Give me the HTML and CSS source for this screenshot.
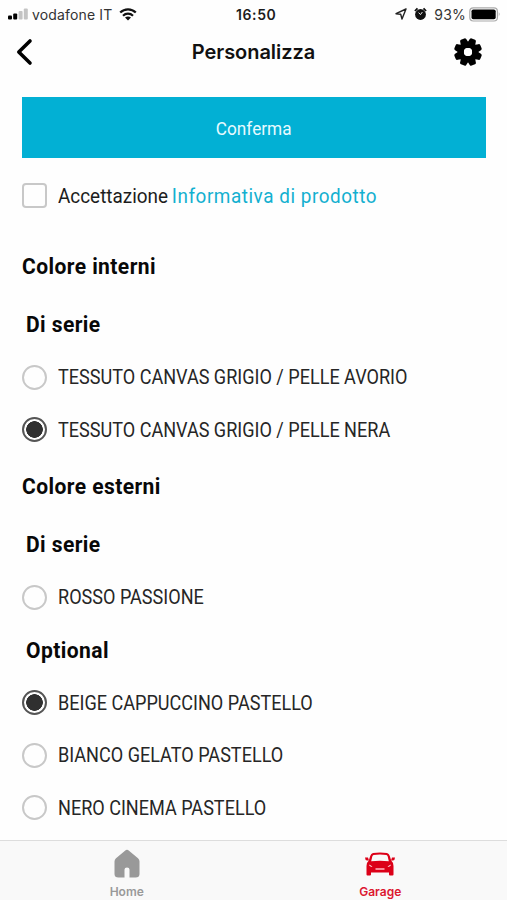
FILE: index.html
```html
<!DOCTYPE html>
<html lang="it">
<head>
<meta charset="utf-8">
<title>Personalizza</title>
<link rel="stylesheet" href="styles.css">
</head>
<body>
<div class="app">
  <header>
    <div class="status">
      <div class="status-left">
        <svg class="signal" width="20" height="12" viewBox="0 0 20 12"><rect x="0" y="7.5" width="4" height="4" rx="1"/><rect x="5.2" y="5.5" width="4" height="6" rx="1"/><rect x="10.6" y="3" width="4" height="8.5" rx="1" fill="#c4c4c4"/><rect x="15.8" y="0.5" width="4" height="11" rx="1" fill="#c4c4c4"/></svg>
        <span class="carrier">vodafone IT</span>
        <svg class="wifi" width="18" height="13" viewBox="0 0 18 13" fill="none" stroke="#111" stroke-width="2.2"><path d="M1.2 4.6C5.5.2 12.500.2 16.800 4.600M4 7.700C6.800 5 11.200 5 14 7.700"/><path d="M9 12.500L6 9.600Q9 7.200 12 9.600Z" fill="#111" stroke="none"/></svg>
      </div>
      <span class="clock">16:50</span>
      <div class="status-right">
        <svg class="arrow" width="12" height="12" viewBox="0 0 12 12" fill="none" stroke="#222" stroke-width="1.4" stroke-linejoin="round"><path d="M11 1L1 5.700L5.700 6.300L7 11Z"/></svg>
        <svg class="alarm" width="13" height="14" viewBox="0 0 13 14"><circle cx="6.500" cy="7.500" r="5.400" fill="#111"/><path d="M.9 4L3.500 1.300M12.100 4L9.500 1.300" stroke="#111" stroke-width="1.800"/><path d="M4.600 5.600L6.500 7.600L8.400 5" fill="none" stroke="#fff" stroke-width=".9"/></svg>
        <span class="percent">93%</span>
        <svg class="battery" width="32" height="15" viewBox="0 0 32 15"><rect x=".8" y=".8" width="27.600" height="13.200" rx="3.500" fill="#fff" stroke="#aaa" stroke-width="1.200"/><rect x="2.500" y="2.500" width="24.200" height="9.800" rx="1.800"/><path d="M29.800 5Q31.600 7.400 29.800 9.800Z" fill="#999"/></svg>
      </div>
    </div>
    <div class="nav">
      <svg class="back" width="18" height="28" viewBox="0 0 18 28" fill="none" stroke="#000" stroke-width="3.600" stroke-linecap="round" stroke-linejoin="round"><path d="M15 3L3.800 14L15 25"/></svg>
      <h1>Personalizza</h1>
      <svg class="gear" width="30" height="30" viewBox="-15 -15 30 30"><defs><path id="tooth" d="M-4.200-8L-3.300-12.600Q-3-14-1.800-14H1.800Q3-14 3.300-12.600L4.200-8Z"/></defs><g transform="rotate(22.500)"><use href="#tooth"/><use href="#tooth" transform="rotate(45)"/><use href="#tooth" transform="rotate(90)"/><use href="#tooth" transform="rotate(135)"/><use href="#tooth" transform="rotate(180)"/><use href="#tooth" transform="rotate(225)"/><use href="#tooth" transform="rotate(270)"/><use href="#tooth" transform="rotate(315)"/></g><circle r="7.200" fill="none" stroke="#000" stroke-width="6.200"/><circle r="4" fill="#fff"/></svg>
    </div>
  </header>
  <main>
    <button class="confirm"><span class="narrow">Conferma</span></button>
    <label class="accept"><i class="box"></i><span class="narrow accept-text">Accettazione <a>Informativa di prodotto</a></span></label>
    <section>
      <h2><span class="narrow">Colore interni</span></h2>
      <h3><span class="narrow">Di serie</span></h3>
      <label class="option"><i class="radio"></i><span class="narrow">TESSUTO CANVAS GRIGIO / PELLE AVORIO</span></label>
      <label class="option"><i class="radio on"></i><span class="narrow">TESSUTO CANVAS GRIGIO / PELLE NERA</span></label>
    </section>
    <section>
      <h2><span class="narrow">Colore esterni</span></h2>
      <h3><span class="narrow">Di serie</span></h3>
      <label class="option"><i class="radio"></i><span class="narrow">ROSSO PASSIONE</span></label>
      <h3 class="optional"><span class="narrow">Optional</span></h3>
      <label class="option"><i class="radio on"></i><span class="narrow">BEIGE CAPPUCCINO PASTELLO</span></label>
      <label class="option"><i class="radio"></i><span class="narrow">BIANCO GELATO PASTELLO</span></label>
      <label class="option"><i class="radio"></i><span class="narrow">NERO CINEMA PASTELLO</span></label>
    </section>
  </main>
  <footer>
    <div class="tab">
      <svg width="28" height="30" viewBox="0 0 28 30"><path d="M14 .8Q15 .8 16 1.700L25 9.200Q26.500 10.500 26.500 12.500V25Q26.500 28.500 22.500 28.500H16.500V20.500Q16.500 18.500 14 18.500T11.500 20.500V28.500H5.500Q1.500 28.500 1.500 25V12.500Q1.500 10.500 3 9.200L12 1.700Q13 .8 14 .8Z" fill="#999"/></svg>
      <span>Home</span>
    </div>
    <div class="tab active">
      <svg width="32" height="30" viewBox="0 0 32 30"><path fill-rule="evenodd" d="M9 4Q16 2.800 23 4Q25 4.400 25.800 7L27.200 11.500Q29.500 13.500 29.500 17V25.500Q29.500 26.500 28.500 26.500H26Q25 26.500 25 25.500V23.500H7V25.500Q7 26.500 6 26.500H3.500Q2.500 26.500 2.500 25.500V17Q2.500 13.500 4.800 11.500L6.200 7Q7 4.400 9 4ZM9.600 6Q8.700 6.200 8.300 7.500L7.200 12.300Q16 11.300 24.800 12.300L23.700 7.500Q23.300 6.200 22.400 6Q16 5 9.600 6Z" fill="#dc0018"/><path d="M1 8.500H4L5 11.500H3Q1 11 1 8.500ZM31 8.500H28L27 11.500H29Q31 11 31 8.500Z" fill="#dc0018"/><path d="M5 15.500L8.500 17.500Q5.300 18.200 5 15.500ZM27 15.500L23.500 17.500Q26.700 18.200 27 15.500Z" fill="#fff"/><path d="M11.500 20H20.500" stroke="#ffb0b8" stroke-width="1.600"/></svg>
      <span>Garage</span>
    </div>
  </footer>
</div>
</body>
</html>
```
FILE: styles.css
```css
* { box-sizing: border-box; }
body { margin: 0; background: #fefefe; color: #1c1c1c; font-family: Roboto, sans-serif; }
.app { width: 507px; height: 900px; display: flex; flex-direction: column; overflow: hidden; }
svg { display: block; flex: none; }
header { height: 80px; font-family: Inter, sans-serif; }
.status { height: 28px; padding: 0 6px 0 8px; display: grid; grid-template-columns: 228px auto 1fr; align-items: center; font-size: 14px; }
.status-left, .status-right { display: flex; align-items: center; }
.status-right { justify-content: flex-end; }
.carrier { margin-left: 4px; color: #333; letter-spacing: 0.15px; }
.wifi { margin-left: 7px; }
.clock { font-weight: 600; letter-spacing: 0.6px; }
.alarm { margin-left: 7px; }
.percent { margin: 0 3px 0 7px; color: #333; letter-spacing: 0.2px; }
.nav { height: 48px; padding: 0 24px 0 15px; display: grid; grid-template-columns: 39px 1fr 30px; align-items: center; }
h1 { margin: 0; text-align: center; font-size: 20px; font-weight: 600; letter-spacing: -0.05px; color: #111; }
main { flex: 1; padding: 17px 21px 0 22px; }
.narrow { display: inline-block; white-space: nowrap; transform: scaleX(0.86); transform-origin: left center; }
.confirm { display: flex; align-items: center; justify-content: center; width: 100%; height: 61px; padding: 2px 0 0; border: 0; background: #02b0d4; color: #e8faff; font: 18.5px Roboto, sans-serif; }
.confirm .narrow { transform: scaleX(0.93); transform-origin: center; }
.accept { height: 75px; margin-bottom: 3px; display: flex; align-items: center; font-size: 21px; }
.accept .accept-text { transform: scaleX(0.9); }
.accept a { margin-left: -1px; color: #13b0d0; letter-spacing: 0.6px; }
.box { width: 25px; height: 25px; margin-right: 11px; border: 2px solid #c8c8c8; border-radius: 4px; flex: none; }
h2, h3 { margin: 0; display: flex; align-items: center; font-size: 22.5px; font-weight: 700; color: #080808; }
h2 .narrow, h3 .narrow { transform: scaleX(0.935); letter-spacing: 0.45px; }
h2 { height: 60px; }
h3 { height: 55px; padding-left: 4px; }
.optional { height: 53px; }
.option { height: 52.5px; display: flex; align-items: center; font-size: 21px; font-weight: 400; color: #262626; }
.radio { width: 25px; height: 25px; margin-right: 11px; border: 2px solid #c8c8c8; border-radius: 50%; flex: none; }
.radio.on { border-color: #555; background: radial-gradient(circle, #303030 0 8px, transparent 8.6px); }
footer { height: 60px; padding-top: 8px; border-top: 1px solid #ddd; background: #f9f9f9; display: grid; grid-template-columns: 1fr 1fr; font-family: Inter, sans-serif; }
.tab { display: flex; flex-direction: column; align-items: center; font-size: 12px; line-height: 14px; font-weight: 600; color: #999; }
.tab span { margin-top: 6px; }
.active { color: #dc1730; }
```
